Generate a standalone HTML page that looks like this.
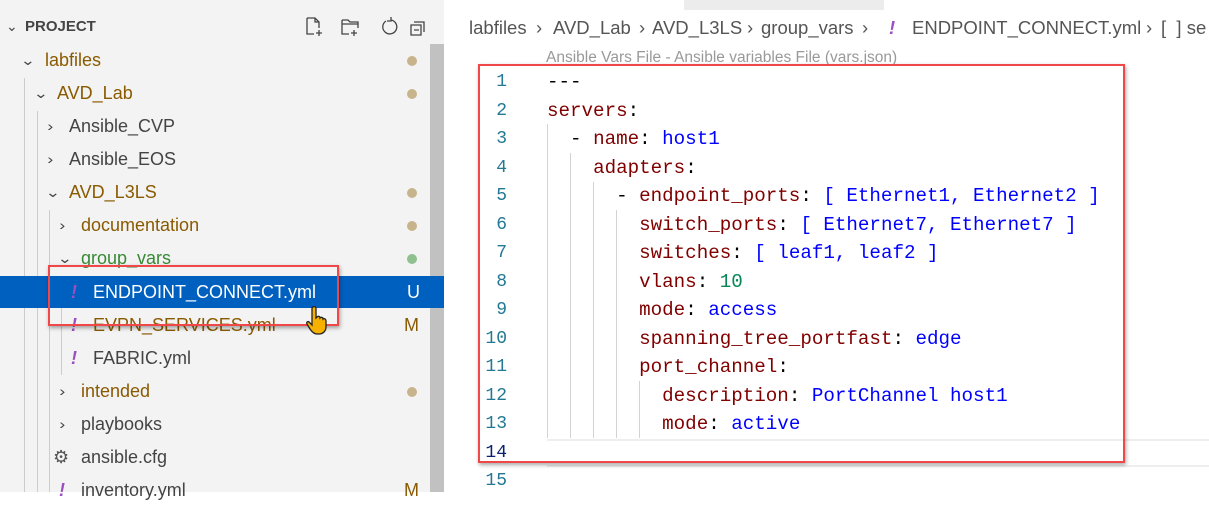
<!DOCTYPE html><html><head><style>
body{margin:0;width:1209px;height:492px;overflow:hidden;background:#fff;font-family:"Liberation Sans",sans-serif;position:relative}
.sb{position:absolute;left:0;top:0;width:444px;height:492px;background:#f3f3f3}
.scr{position:absolute;left:430px;top:44px;width:14px;height:448px;background:#c1c1c1}
.r{position:absolute;left:0;width:430px;height:33px;line-height:33px;font-size:18px;color:#8a5a00}
.r .t{position:absolute}
.r .c{position:absolute;font-size:14px;color:#444;transform:scaleX(1.3)}
.dot{position:absolute;left:407px;top:12px;width:10px;height:10px;border-radius:50%;background:#c8b48c}
.g{color:#444}
.ex{color:#9b4fc0;font-weight:bold;position:absolute;font-style:italic}
.vl{position:absolute;width:1px;background:#ccc}
.code{position:absolute;left:0;top:68px;font-family:"Liberation Mono",monospace;font-size:19.2px}
.ln{position:absolute;height:28.5px;line-height:28.5px;color:#237893;width:40px;text-align:right;font-size:18px}
.cl{position:absolute;left:547px;height:28.5px;line-height:28.5px;white-space:pre;color:#000}
.k{color:#800000}.v{color:#0000ff}.n{color:#098658}
.gl{position:absolute;width:1px;background:#d3d3d3}
.bc{position:absolute;top:17px;font-size:18.5px;color:#555;white-space:nowrap}
</style></head><body>
<div class="sb">
<div style="position:absolute;left:6px;top:18px;font-size:14px;color:#444">&#8964;</div>
<div style="position:absolute;left:25px;top:18px;font-size:15px;font-weight:bold;color:#444">PROJECT</div>
<svg style="position:absolute;left:304px;top:16px" width="130" height="22" fill="none" stroke="#444" stroke-width="1.3">
<path d="M3 2h8l4 4v6M3 2v16h7M15 14v6M12 17h6M11 2v4h4"/>
<path d="M38 4h6l2 2h8v6M38 4v14h7M50 14v6M47 17h6M38 8h16"/>
<path d="M82 5a7 7 0 1 0 5 -1M87 1v4h-4"/>
<path d="M110 6h10v10M107 9h10v10h-10zM110 14h5"/>
</svg>
</div>
<div class="scr"></div>
<div class="vl" style="left:24px;top:78px;height:414px"></div>
<div class="vl" style="left:37px;top:111px;height:381px"></div>
<div class="vl" style="left:49px;top:210px;height:282px"></div>
<div class="vl" style="left:61px;top:276px;height:99px"></div>

<div class="r" style="top:44px"><span class="c" style="left:22px">&#8964;</span><span class="t" style="left:45px">labfiles</span><i class="dot"></i></div>
<div class="r" style="top:77px"><span class="c" style="left:35px">&#8964;</span><span class="t" style="left:57px">AVD_Lab</span><i class="dot"></i></div>
<div class="r g" style="top:110px"><span class="c" style="left:48px">&#8250;</span><span class="t" style="left:69px">Ansible_CVP</span></div>
<div class="r g" style="top:143px"><span class="c" style="left:48px">&#8250;</span><span class="t" style="left:69px">Ansible_EOS</span></div>
<div class="r" style="top:176px"><span class="c" style="left:47px">&#8964;</span><span class="t" style="left:69px">AVD_L3LS</span><i class="dot"></i></div>
<div class="r" style="top:209px"><span class="c" style="left:60px">&#8250;</span><span class="t" style="left:81px">documentation</span><i class="dot"></i></div>
<div class="r" style="top:242px;color:#388a34"><span class="c" style="left:59px">&#8964;</span><span class="t" style="left:81px">group_vars</span><i class="dot" style="background:#8fc08f"></i></div>
<div class="r" style="top:276px;height:32px;line-height:32px;background:#0060c0;color:#fff;width:444px"><span class="ex" style="left:71px">!</span><span class="t" style="left:93px">ENDPOINT_CONNECT.yml</span><span class="t" style="left:407px">U</span></div>
<div class="r" style="top:309px"><span class="ex" style="left:71px">!</span><span class="t" style="left:93px">EVPN_SERVICES.yml</span><span class="t" style="left:404px;color:#8a5a00">M</span></div>
<div class="r g" style="top:342px"><span class="ex" style="left:71px">!</span><span class="t" style="left:93px">FABRIC.yml</span></div>
<div class="r" style="top:375px"><span class="c" style="left:60px">&#8250;</span><span class="t" style="left:81px">intended</span><i class="dot"></i></div>
<div class="r g" style="top:408px"><span class="c" style="left:60px">&#8250;</span><span class="t" style="left:81px">playbooks</span></div>
<div class="r g" style="top:441px"><span class="t" style="left:53px;color:#555">&#9881;</span><span class="t" style="left:81px">ansible.cfg</span></div>
<div class="r g" style="top:474px"><span class="ex" style="left:59px">!</span><span class="t" style="left:81px">inventory.yml</span><span class="t" style="left:404px;color:#8a5a00">M</span></div>
<div style="position:absolute;left:48px;top:265px;width:287px;height:57px;border:2.5px solid #f04848;box-shadow:1px 2px 4px rgba(0,0,0,.35)"></div>
<svg style="position:absolute;left:305px;top:305px" width="26" height="32"><path d="M8 2c2-1 3 0 3 2v9l1-1c1-1 3-1 3 1 1-1 3-1 3 1 1-1 3 0 3 2v6c0 4-3 7-7 7h-2c-3 0-5-2-7-5l-3-5c-1-2 1-3 2-2l3 3V4c0-1 0-2 1-2z" fill="#f5b000" stroke="#222" stroke-width="1.3"/></svg>

<div style="position:absolute;left:684px;top:0;width:200px;height:10px;background:#ececec"></div>
<span class="bc" style="left:469px">labfiles</span><span class="bc" style="left:536px">&#8250;</span>
<span class="bc" style="left:553px">AVD_Lab</span><span class="bc" style="left:639px">&#8250;</span>
<span class="bc" style="left:652px">AVD_L3LS</span><span class="bc" style="left:747px">&#8250;</span>
<span class="bc" style="left:761px">group_vars</span><span class="bc" style="left:862px">&#8250;</span>
<span class="bc" style="left:889px;color:#9b4fc0;font-weight:bold;font-style:italic">!</span>
<span class="bc" style="left:912px">ENDPOINT_CONNECT.yml</span><span class="bc" style="left:1146px">&#8250;</span>
<span class="bc" style="left:1161px">[&nbsp;&nbsp;]&nbsp;se</span>
<div style="position:absolute;left:546px;top:49px;font-size:15.5px;color:#999">Ansible Vars File - Ansible variables File (vars.json)</div>

<div style="position:absolute;left:547px;top:439px;width:662px;height:28px;border-top:2px solid #eee;border-bottom:2px solid #eee;box-sizing:border-box"></div>
<div class="gl" style="left:547px;top:124px;height:314px"></div>
<div class="gl" style="left:570px;top:153px;height:285px"></div>
<div class="gl" style="left:593px;top:182px;height:256px"></div>
<div class="gl" style="left:616px;top:210px;height:228px"></div>
<div class="gl" style="left:639px;top:381px;height:57px"></div>

<div class="code">
<div class="ln" style="top:0;left:467px">1</div><div class="cl" style="top:0">---</div>
<div class="ln" style="top:28.5px;left:467px">2</div><div class="cl" style="top:28.5px"><span class="k">servers</span>:</div>
<div class="ln" style="top:57px;left:467px">3</div><div class="cl" style="top:57px">  - <span class="k">name</span>: <span class="v">host1</span></div>
<div class="ln" style="top:85.5px;left:467px">4</div><div class="cl" style="top:85.5px">    <span class="k">adapters</span>:</div>
<div class="ln" style="top:114px;left:467px">5</div><div class="cl" style="top:114px">      - <span class="k">endpoint_ports</span>: <span class="v">[ Ethernet1, Ethernet2 ]</span></div>
<div class="ln" style="top:142.5px;left:467px">6</div><div class="cl" style="top:142.5px">        <span class="k">switch_ports</span>: <span class="v">[ Ethernet7, Ethernet7 ]</span></div>
<div class="ln" style="top:171px;left:467px">7</div><div class="cl" style="top:171px">        <span class="k">switches</span>: <span class="v">[ leaf1, leaf2 ]</span></div>
<div class="ln" style="top:199.5px;left:467px">8</div><div class="cl" style="top:199.5px">        <span class="k">vlans</span>: <span class="n">10</span></div>
<div class="ln" style="top:228px;left:467px">9</div><div class="cl" style="top:228px">        <span class="k">mode</span>: <span class="v">access</span></div>
<div class="ln" style="top:256.5px;left:467px">10</div><div class="cl" style="top:256.5px">        <span class="k">spanning_tree_portfast</span>: <span class="v">edge</span></div>
<div class="ln" style="top:285px;left:467px">11</div><div class="cl" style="top:285px">        <span class="k">port_channel</span>:</div>
<div class="ln" style="top:313.5px;left:467px">12</div><div class="cl" style="top:313.5px">          <span class="k">description</span>: <span class="v">PortChannel host1</span></div>
<div class="ln" style="top:342px;left:467px">13</div><div class="cl" style="top:342px">          <span class="k">mode</span>: <span class="v">active</span></div>
<div class="ln" style="top:370.5px;left:467px;color:#0b216f">14</div>
<div class="ln" style="top:399px;left:467px">15</div>
</div>
<div style="position:absolute;left:478px;top:64px;width:643px;height:395px;border:2.5px solid #f04848;box-shadow:1px 2px 4px rgba(0,0,0,.35)"></div>
</body></html>
